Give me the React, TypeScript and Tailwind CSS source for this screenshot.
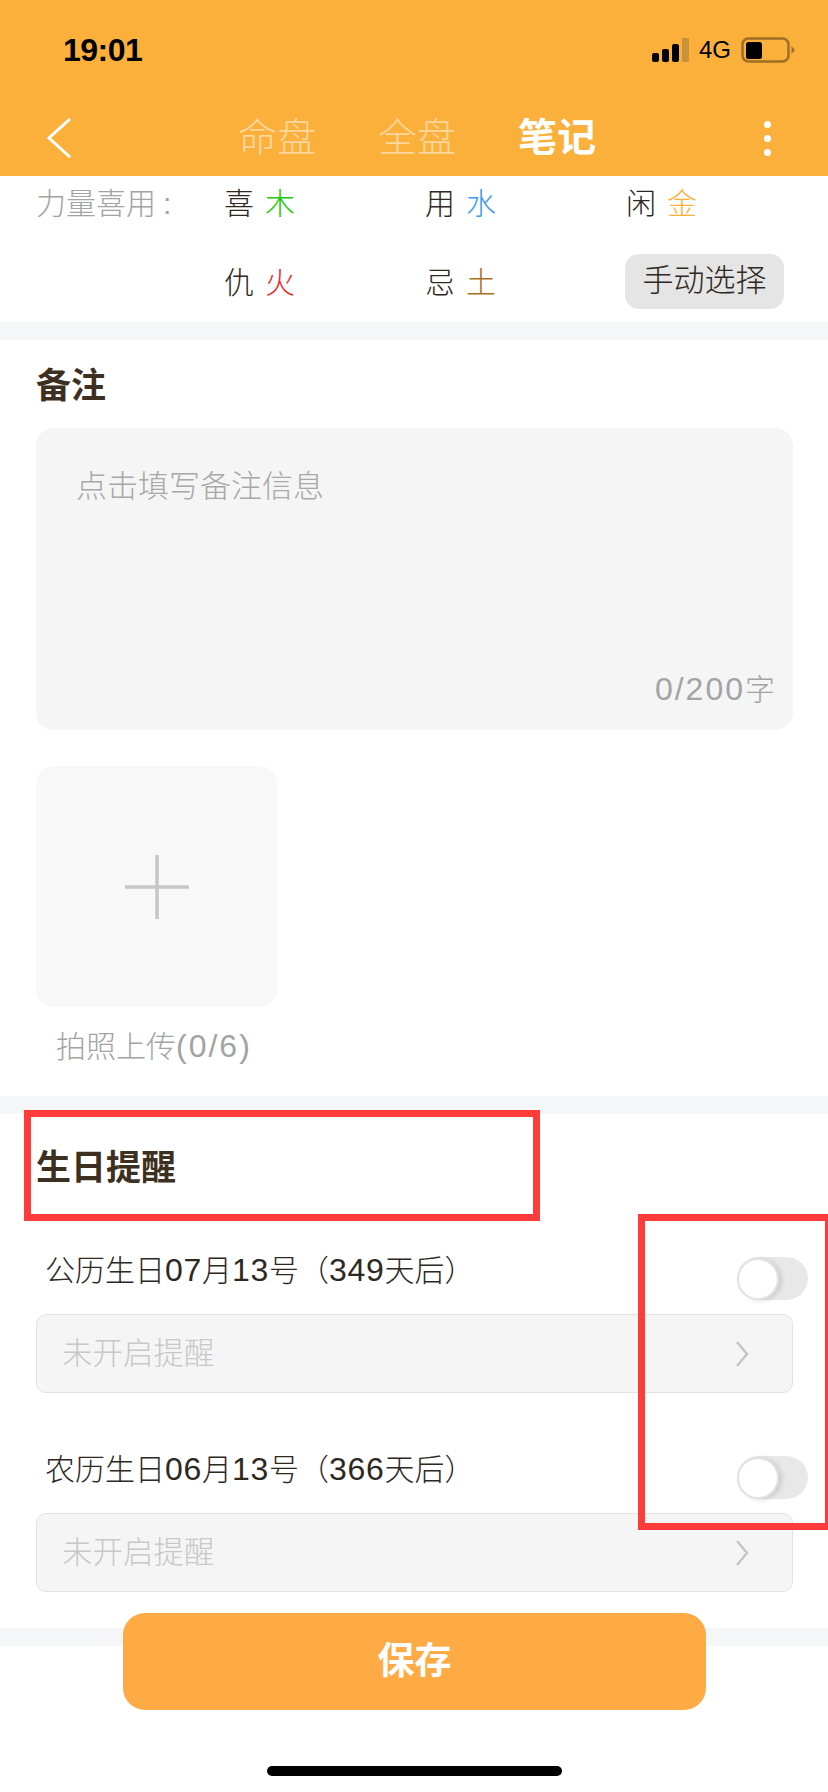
import type { ReactNode } from "react"

const font = "font-['Liberation_Sans','Noto_Sans_CJK_SC',sans-serif]"

function Num({ children }: { children: ReactNode }) {
  return <span className="text-[32px] tracking-[0.7px]">{children}</span>
}

function Element({ label, name, color, className = "" }: { label: string; name: string; color: string; className?: string }) {
  return (
    <div className={`w-[201px] shrink-0 flex gap-[11px] text-[30px] leading-[40px] text-[#2e281f] font-light ${className}`}>
      <span>{label}</span>
      <span className={color}>{name}</span>
    </div>
  )
}

function Toggle() {
  return (
    <div className="w-[71px] h-[43px] mt-[7px] rounded-full bg-[#e8e8e8] flex items-center">
      <div className="w-[42px] h-[42px] rounded-full bg-white border-2 border-[#e2e2e2] shadow-[3px_1px_5px_rgba(0,0,0,0.12)]" />
    </div>
  )
}

function Birthday({ children }: { children: ReactNode }) {
  return (
    <div>
      <div className="h-[64px] pl-[45px] pr-[20px] flex justify-between items-start">
        <span className="text-[30px] leading-[40px] text-[#2e281f] font-light">{children}</span>
        <Toggle />
      </div>
      <div className="ml-[36px] w-[757px] h-[79px] rounded-[10px] border border-[#e3e3e3] bg-[#f5f5f5] pl-[25px] pr-[43px] flex items-center justify-between">
        <span className="text-[30.5px] text-[#c8c8c8] font-light">未开启提醒</span>
        <svg width="14" height="26" viewBox="0 0 14 26" className="text-[#c4c4c4]">
          <path d="M2 1L12 13L2 25" stroke="currentColor" strokeWidth="2.4" fill="none" />
        </svg>
      </div>
    </div>
  )
}

export default function App() {
  return (
    <div className={`${font} relative w-[828px] h-[1792px] overflow-hidden bg-white`}>
      <header className="h-[176px] bg-[#fbb03b]">
        <div className="h-[100px] pl-[63px] pr-[33px] flex items-center justify-between">
          <span className="text-[32px] font-bold text-black tracking-[-0.5px]">19:01</span>
          <div className="flex items-center">
            <svg width="37" height="25" viewBox="0 0 37 25" className="mr-[10px]">
              <rect x="0" y="15" width="7" height="9" rx="2" fill="#000" />
              <rect x="10" y="11" width="7" height="13" rx="2" fill="#000" />
              <rect x="20" y="6" width="7" height="18" rx="2" fill="#000" />
              <rect x="30" y="0" width="7" height="24" rx="1" fill="#c9923a" />
            </svg>
            <span className="text-[24px] text-black mr-[10px]">4G</span>
            <svg width="54" height="26" viewBox="0 0 54 26">
              <rect x="1.5" y="1.5" width="46" height="23" rx="6" fill="none" stroke="#9c7026" strokeWidth="2.5" />
              <rect x="5" y="5" width="16" height="17" rx="2.5" fill="#000" />
              <path d="M50.5 9 L54 13 L50.5 17 Z" fill="#9c7026" />
            </svg>
          </div>
        </div>
        <div className="h-[76px] flex items-center justify-between">
          <div className="w-[103px] pl-[47px]">
            <svg width="24" height="40" viewBox="0 0 24 40">
              <path d="M23 1L2 20L23 39" stroke="#ffffff" strokeWidth="3" fill="none" />
            </svg>
          </div>
          <nav className="flex gap-[62px] text-[39px] font-light text-white/50">
            <span>命盘</span>
            <span>全盘</span>
            <span className="font-bold text-white">笔记</span>
          </nav>
          <div className="w-[97px] pl-[33px] flex">
            <div className="flex flex-col gap-[7px]">
              <div className="w-[7px] h-[7px] rounded-full bg-white" />
              <div className="w-[7px] h-[7px] rounded-full bg-white" />
              <div className="w-[7px] h-[7px] rounded-full bg-white" />
            </div>
          </div>
        </div>
      </header>

      <section className="h-[146px] pl-[36px] pb-[13px] flex flex-col gap-[23px]">
        <div className="h-[55px] flex items-center">
          <div className="w-[188px] shrink-0 text-[30px] leading-[40px] text-[#a3a3a3] font-light">
            力量喜用<span className="ml-[7px]">:</span>
          </div>
          <Element label="喜" name="木" color="text-[#22c70a]" />
          <Element label="用" name="水" color="text-[#3b9cf0]" />
          <Element label="闲" name="金" color="text-[#fbb03b]" />
        </div>
        <div className="h-[55px] flex items-center">
          <div className="w-[188px] shrink-0" />
          <Element label="仇" name="火" color="text-[#e23030]" className="mt-[3px]" />
          <Element label="忌" name="土" color="text-[#a8711c]" className="mt-[3px]" />
          <button className="w-[159px] h-[55px] -ml-[1px] rounded-[14px] bg-[#e5e5e5] text-[31px] text-[#2e281f] font-light">手动选择</button>
        </div>
      </section>
      <div className="h-[18px] bg-[#f5f6f8]" />

      <section className="pl-[36px] pb-[29px]">
        <h2 className="h-[88px] pt-[4px] flex items-center text-[35px] font-bold text-[#3d3021]">备注</h2>
        <div className="w-[757px] h-[302px] rounded-[18px] bg-[#f5f5f5] pl-[40px] pr-[18px] pt-[39px] pb-[20px] flex flex-col justify-between">
          <span className="text-[31px] leading-[40px] text-[#a8a8a8] font-light">点击填写备注信息</span>
          <span className="self-end text-[30px] leading-[40px] text-[#a3a3a3] font-light">
            <span className="text-[32px] tracking-[2px]">0/200</span>字
          </span>
        </div>
        <div className="mt-[36px] w-[241px] h-[241px] rounded-[18px] bg-[#f8f8f8] flex items-center justify-center">
          <svg width="64" height="64" viewBox="0 0 64 64">
            <path d="M32 0V64M0 32H64" stroke="#c6c6c6" strokeWidth="3.5" fill="none" />
          </svg>
        </div>
        <div className="mt-[19px] pl-[20px] text-[30px] leading-[40px] text-[#a3a3a3] font-light">
          拍照上传<span className="text-[32px] tracking-[2px]">(0/6)</span>
        </div>
      </section>
      <div className="h-[18px] bg-[#f5f6f8]" />

      <section className="pb-[36px]">
        <h2 className="h-[108px] pl-[36px] flex items-center text-[35px] font-bold text-[#3d3021]">生日提醒</h2>
        <div className="pt-[28px] flex flex-col gap-[56px]">
          <Birthday>公历生日<Num>07</Num>月<Num>13</Num>号（<Num>349</Num>天后）</Birthday>
          <Birthday>农历生日<Num>06</Num>月<Num>13</Num>号（<Num>366</Num>天后）</Birthday>
        </div>
      </section>
      <div className="h-[18px] bg-[#f5f6f8]" />

      {/* bottom bar floats over the page */}
      <button className="absolute left-[123px] top-[1613px] w-[583px] h-[97px] rounded-[22px] bg-[#ffab45] text-[37px] font-bold text-white">保存</button>
      <div className="absolute left-[267px] top-[1766px] w-[295px] h-[10px] rounded-full bg-black" />

      {/* annotation boxes drawn on the screenshot */}
      <div className="absolute left-[24px] top-[1110px] w-[516px] h-[111px] border-[7px] border-[#ff3b3b]" />
      <div className="absolute left-[638px] top-[1214px] w-[190px] h-[316px] border-[7px] border-r-[3px] border-[#ff3b3b]" />
    </div>
  )
}
